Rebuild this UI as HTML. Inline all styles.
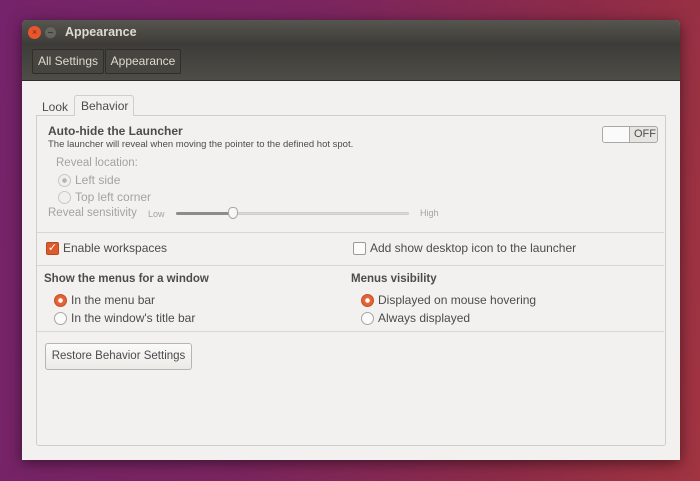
<!DOCTYPE html>
<html><head><meta charset="utf-8"><style>
*{margin:0;padding:0;box-sizing:border-box}
body{width:700px;height:481px;overflow:hidden;position:relative;font-family:"Liberation Sans",sans-serif;
background:linear-gradient(100deg,#75236a 0%,#7a2560 40%,#8d2b48 75%,#a13440 100%);}
.a{position:absolute;white-space:nowrap}
#win{position:absolute;left:22px;top:20px;width:658px;height:440px;background:#f2f1f0;border-radius:5px 5px 0 0;box-shadow:0 3px 14px rgba(0,0,0,.5);overflow:hidden}
#head{position:absolute;left:0;top:0;width:658px;height:61px;background:linear-gradient(#56554f,#3d3c38 40%,#4e4d47);border-bottom:1px solid #2e2d2a}
.btn{position:absolute;top:29px;height:25px;border:1px solid #2f2e2b;background:#46453f;color:#dfdbd2;font-size:12px;line-height:23px;text-align:center;white-space:nowrap;border-radius:2px}
.t{color:#4c4c4c;font-size:12px}
.g{color:#a5a39f;font-size:11.5px}
.rad{position:absolute;width:13px;height:13px;border-radius:50%;border:1px solid #a8a6a2;background:#fbfbfb}
.on{border-color:#c5532b;background:radial-gradient(circle,#fff 0 2px,#e7693b 2.5px,#d9562b)}
.sep{position:absolute;left:37px;width:627px;height:1px;background:#d9d7d3}
</style></head><body>
<div id="win">
<div id="head">
<div class="a" style="left:6px;top:6px;width:13px;height:13px;border-radius:50%;background:#e7562d;color:#7a2a12;font-size:9px;line-height:13px;text-align:center">×</div>
<div class="a" style="left:22px;top:6px;width:13px;height:13px;border-radius:50%;background:#66655f;border:1px solid #4a4944"><div style="margin:5px 3px;height:1px;background:#3a3935"></div></div>
<div class="a" style="left:43px;top:3px;color:#dfdbd2;font-size:12.5px;font-weight:bold;line-height:18px">Appearance</div>
<div class="btn" style="left:10px;width:72px">All Settings</div>
<div class="btn" style="left:83px;width:76px">Appearance</div>
</div>
</div>
<div class="a" style="left:37px;top:96px;width:37px;height:20px;font-size:12px;color:#4c4c4c;padding:4px 0 0 5px">Look</div>
<div class="a" style="left:74px;top:95px;width:60px;height:21px;border:1px solid #d0ceca;border-bottom:none;border-radius:3px 3px 0 0;background:#f2f1f0;font-size:12px;color:#4c4c4c;padding:3px 0 0 6px;z-index:2">Behavior</div>
<div class="a" style="left:36px;top:115px;width:630px;height:331px;border:1px solid #d0ceca;border-radius:0 0 3px 3px"></div>
<div class="a t" style="left:48px;top:124px;font-weight:bold;font-size:12px">Auto-hide the Launcher</div>
<div class="a t" style="left:48px;top:139px;font-size:9.5px">The launcher will reveal when moving the pointer to the defined hot spot.</div>
<div class="a" style="left:602px;top:126px;width:56px;height:17px;border:1px solid #aaa8a3;border-radius:3px;background:#e6e5e2"><div style="position:absolute;left:0;top:0;width:27px;height:15px;background:#fafafa;border-right:1px solid #aaa8a3;border-radius:2px 0 0 2px"></div><span style="position:absolute;left:31px;top:0;font-size:11px;color:#4c4c4c;line-height:15px">OFF</span></div>
<div class="a g" style="left:56px;top:157px">Reveal location:</div>
<div class="rad" style="left:58px;top:174px;border-color:#c9c7c3;background:radial-gradient(circle,#b5b3af 0 2px,#f0efed 2.5px)"></div>
<div class="a g" style="left:75px;top:173px;font-size:12px">Left side</div>
<div class="rad" style="left:58px;top:191px;border-color:#c9c7c3;background:#f0efed"></div>
<div class="a g" style="left:75px;top:190px;font-size:12px">Top left corner</div>
<div class="a g" style="left:48px;top:207px">Reveal sensitivity</div>
<div class="a g" style="left:148px;top:209px;font-size:9px">Low</div>
<div class="a" style="left:176px;top:212px;width:233px;height:3px;border-radius:2px;background:#dcdad6;border:1px solid #cfcdc9"></div>
<div class="a" style="left:176px;top:212px;width:57px;height:3px;border-radius:2px;background:#8e8c88"></div>
<div class="a" style="left:228px;top:207px;width:10px;height:12px;border-radius:40% 40% 50% 50%;background:#f7f7f6;border:1px solid #a8a6a2"></div>
<div class="a g" style="left:420px;top:208px;font-size:9px">High</div>
<div class="sep" style="top:232px"></div>
<div class="a" style="left:46px;top:242px;width:13px;height:13px;border-radius:2px;background:#dd5a2d;border:1px solid #b64920;color:#fff;font-size:11px;line-height:11px;text-align:center">✓</div>
<div class="a t" style="left:63px;top:241px">Enable workspaces</div>
<div class="a" style="left:353px;top:242px;width:13px;height:13px;border-radius:2px;background:#fbfbfb;border:1px solid #9c9a96"></div>
<div class="a t" style="left:370px;top:241px">Add show desktop icon to the launcher</div>
<div class="sep" style="top:265px"></div>
<div class="a t" style="left:44px;top:273px;font-weight:bold;font-size:11.5px">Show the menus for a window</div>
<div class="rad on" style="left:54px;top:294px"></div>
<div class="a t" style="left:71px;top:293px">In the menu bar</div>
<div class="rad" style="left:54px;top:312px"></div>
<div class="a t" style="left:71px;top:311px">In the window's title bar</div>
<div class="a t" style="left:351px;top:273px;font-weight:bold;font-size:11.5px">Menus visibility</div>
<div class="rad on" style="left:361px;top:294px"></div>
<div class="a t" style="left:378px;top:293px">Displayed on mouse hovering</div>
<div class="rad" style="left:361px;top:312px"></div>
<div class="a t" style="left:378px;top:311px">Always displayed</div>
<div class="sep" style="top:331px"></div>
<div class="a t" style="left:45px;top:343px;width:147px;height:27px;border:1px solid #b7b5b0;border-radius:3px;background:linear-gradient(#fafafa,#eceae7);font-size:11.5px;line-height:25px;text-align:center">Restore Behavior Settings</div>
</body></html>
